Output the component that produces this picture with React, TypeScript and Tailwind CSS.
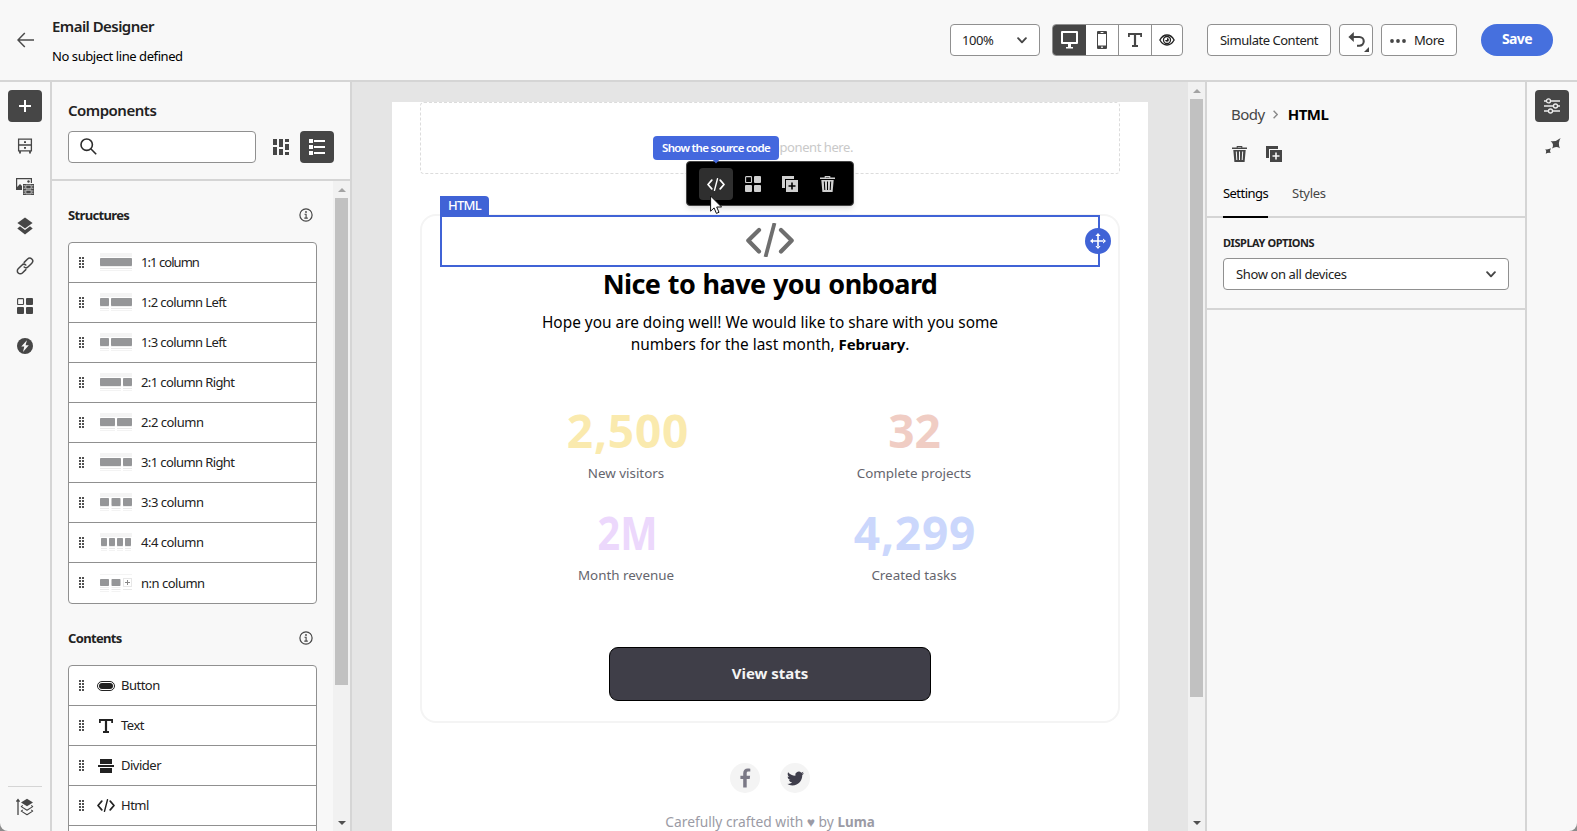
import type { ReactNode } from "react";

type IconProps = { className?: string };

const PlusIcon = () => (
  <svg width="12" height="12" viewBox="0 0 12 12" fill="none" stroke="#fff" strokeWidth="2"><path d="M6 0v12M0 6h12" /></svg>
);

const BackIcon = () => (
  <svg width="18" height="16" viewBox="0 0 18 16" fill="none" stroke="#4b4b4b" strokeWidth="1.5"><path d="M7.8 1 1 8l6.8 7M1 8h16" /></svg>
);

const DrawerIcon = () => (
  <svg width="16" height="16" viewBox="0 0 16 16" fill="none" stroke="#464646" strokeWidth="1.3">
    <path d="M1.6 1.1h12.8v11.8H1.6zM1.6 7h12.8" />
    <path d="M3 13v2.4M13 13v2.4M7 4.2h2M7 9.8h2" strokeWidth="1.8" />
  </svg>
);

const MediaIcon = () => (
  <svg className="mt-0.5" width="18" height="18" viewBox="0 0 18 18" fill="#464646">
    <path d="M0 0h16v5h-1.2V1.2H1.2V9L4 6l2 2v4H0z" />
    <circle cx="12.5" cy="3.5" r="1.2" />
    <path d="M7 6h11v11H7z" />
    <path d="M9.8 7.2h5.4v3.6H9.8zM9.8 12.2h5.4v3.6H9.8z" fill="#464646" stroke="#f8f8f8" strokeWidth=".7" />
    <path d="M7.7 7.2h1v1h-1zm0 2.6h1v1h-1zm0 2.6h1v1h-1zm0 2.4h1v1h-1zM16.3 7.2h1v1h-1zm0 2.6h1v1h-1zm0 2.6h1v1h-1zm0 2.4h1v1h-1z" fill="#f8f8f8" />
  </svg>
);

const LayersIcon = () => (
  <svg width="18" height="18" viewBox="0 0 18 18" fill="#464646">
    <path d="M9 .6 16.6 6 9 11.4 1.4 6z" />
    <path d="m4 9.3 5 3.7 5-3.7 2.7 2.1L9 17.4l-7.7-6z" />
  </svg>
);

const LinkIcon = () => (
  <svg width="18" height="18" viewBox="0 0 18 18" fill="none" stroke="#464646" strokeWidth="1.5" strokeLinecap="round">
    <path d="M8.2 5.4 11.6 2a2.9 2.9 0 0 1 4.2 4.2l-3.6 3.6a2.9 2.9 0 0 1-4 .2" />
    <path d="M9.8 12.6 6.4 16a2.9 2.9 0 0 1-4.2-4.2l3.6-3.6a2.9 2.9 0 0 1 4-.2" />
  </svg>
);

const TilesIcon = ({ className = "text-[#464646]" }: IconProps) => (
  <svg className={className} width="16" height="16" viewBox="0 0 16 16" fill="currentColor">
    <rect x=".6" y=".6" width="5.9" height="5.9" rx=".6" fill="none" stroke="currentColor" strokeWidth="1.1" />
    <rect x="9" width="7" height="7" rx="1" /><rect y="9" width="7" height="7" rx="1" /><rect x="9" y="9" width="7" height="7" rx="1" />
  </svg>
);

const BoltIcon = () => (
  <svg width="16" height="16" viewBox="0 0 16 16"><circle cx="8" cy="8" r="8" fill="#464646" /><path d="M9.9 2.2 4.3 8.6h3L6 13.9l5.8-6.7H8.6z" fill="#f8f8f8" /></svg>
);

const StackArrowIcon = () => (
  <svg width="18" height="18" viewBox="0 0 18 18" fill="none" stroke="#464646" strokeWidth="1.1">
    <path d="M2 17V2.2M.4 3.6 2 1.6l1.6 2" strokeWidth="1.3" />
    <path d="m11 .8 6 3.7-6 3.7-6-3.7z" fill="#464646" stroke="none" />
    <path d="m6.7 7.4-1.4 1.2L11 12.2l5.7-3.6-1.4-1.2M6.7 11.8l-1.4 1.3L11 16.8l5.7-3.7-1.4-1.3" strokeLinejoin="round" />
  </svg>
);

const SearchIcon = () => (
  <svg className="-mt-0.5" width="17" height="17" viewBox="0 0 17 17" fill="none" stroke="#2c2c2c" strokeWidth="1.6"><circle cx="6.7" cy="6.7" r="5.7" /><path d="m10.8 10.8 5.4 5.4" /></svg>
);

const MosaicIcon = () => (
  <svg width="16" height="16" viewBox="0 0 16 16" fill="#464646"><path d="M0 0h4v6H0zM0 8h4v8H0zM6 0h4v8H6zM6 10h4v6H6zM12 0h4v3h-4zM12 5h4v6h-4zM12 13h4v3h-4z" /></svg>
);

const ListIcon = () => (
  <svg width="16" height="16" viewBox="0 0 16 16" fill="#fff"><path d="M0 0h4v4H0zM0 6h4v4H0zM0 12h4v4H0zM5 1h11v2H5zM5 7h11v2H5zM5 13h11v2H5z" /></svg>
);

const InfoIcon = () => (
  <svg width="14" height="14" viewBox="0 0 14 14" fill="none" stroke="#464646" strokeWidth="1.2">
    <circle cx="7" cy="7" r="6.1" /><path d="M5.5 6.2h1.6v3.9M5.3 10.1h3.5" strokeWidth="1.1" /><circle cx="7" cy="4" r=".9" fill="#464646" stroke="none" />
  </svg>
);

const ChevronIcon = () => (
  <svg width="10" height="7" viewBox="0 0 10 7" fill="none" stroke="#464646" strokeWidth="1.9" strokeLinecap="round" strokeLinejoin="round"><path d="M1.1 1.2 5 5.3l3.9-4.1" /></svg>
);

const DesktopIcon = () => (
  <svg className="-ml-px" width="17" height="18" viewBox="0 0 17 18" fill="#fff"><path fillRule="evenodd" d="M1 0h15a1 1 0 0 1 1 1v11a1 1 0 0 1-1 1h-6v3h2v1.6H5V16h2v-3H1a1 1 0 0 1-1-1V1a1 1 0 0 1 1-1zm1 2v9h13V2z" /></svg>
);

const PhoneIcon = () => (
  <svg width="10" height="18" viewBox="0 0 10 18" fill="#464646"><path fillRule="evenodd" d="M1 0h8a1 1 0 0 1 1 1v16a1 1 0 0 1-1 1H1a1 1 0 0 1-1-1V1a1 1 0 0 1 1-1zm0 3v11.6h8V3z" /><path d="M3.6 1.1h2.8v.8H3.6zM4.2 15.6h1.6v1.4H4.2z" fill="#fff" /></svg>
);

const TextIcon = ({ className = "text-[#464646]" }: IconProps) => (
  <svg className={className} width="14" height="14" viewBox="0 0 14 14" fill="currentColor"><path d="M0 0h14v4h-1.8V2H8.1v10H10v2H4v-2h1.9V2H1.8v2H0z" /></svg>
);

const EyeIcon = () => (
  <svg className="-ml-px" width="16" height="12" viewBox="0 0 17 13"><path d="M.8 6.5C2.6 3.2 5.2 1.1 8.5 1.1s5.9 2.1 7.7 5.4c-1.8 3.3-4.4 5.4-7.7 5.4S2.6 9.8.8 6.5z" fill="none" stroke="#222" strokeWidth="1.5" /><circle cx="8.5" cy="6.5" r="4.5" fill="#222" /><circle cx="8.5" cy="6.5" r="3.1" fill="#fff" /><path d="M8.5 4.2v2.3H6.4a2.1 2.1 0 1 0 2.1-2.3z" fill="#222" /></svg>
);

const UndoIcon = () => (
  <svg width="17" height="16" viewBox="0 0 17 16"><path d="M4 5h7.4a4.3 4.3 0 0 1 0 8.7H9" fill="none" stroke="#464646" strokeWidth="2.1" /><path d="M5.8 0v10L.4 5z" fill="#464646" /></svg>
);

const TrashIcon = ({ className = "text-[#464646]" }: IconProps) => (
  <svg className={className} width="15" height="16" viewBox="0 0 15 16" fill="currentColor">
    <path fillRule="evenodd" d="M4.7 1.5V0h5.6v1.5H15V3H0V1.5zM5.7 1v.6h3.6V1zM1.3 4h12.4l-1.1 12H2.4zm2.5 1.5.5 8.6h1l-.5-8.6zm3.2 0v8.6h1V5.5zm3.2 0-.5 8.6h1l.5-8.6z" />
  </svg>
);

const DuplicateIcon = ({ className = "text-[#464646]" }: IconProps) => (
  <svg className={className} width="16" height="16" viewBox="0 0 16 16" fill="currentColor">
    <path d="M0 0h12v3H3v9H0z" />
    <path fillRule="evenodd" d="M4 4h12v12H4zm5.2 2.5v2.7H6.5v1.6h2.7v2.7h1.6v-2.7h2.7V9.2h-2.7V6.5z" />
  </svg>
);

const CodeIcon = ({ className = "text-[#222]" }: IconProps) => (
  <svg className={className} width="18" height="13" viewBox="0 0 18 13" fill="none" stroke="currentColor" strokeWidth="1.7" strokeLinecap="round" strokeLinejoin="round">
    <path d="M4.8 2.1 1 6.5l3.8 4.4M13.2 2.1 17 6.5l-3.8 4.4" /><path d="M10.5.7 7.5 12.3" strokeWidth="1.4" />
  </svg>
);

const BigCodeIcon = () => (
  <svg className="-mt-0.5" width="48" height="34" viewBox="0 0 48 34" fill="none" stroke="#6e6e6e" strokeLinecap="round" strokeLinejoin="round">
    <path d="M13 7 2.3 17.5 13 28.5M35 7l10.7 10.5L35 28.5" strokeWidth="4.2" /><path d="M28.5 0 19.5 34" strokeWidth="3.8" strokeLinecap="butt" />
  </svg>
);

const ButtonIcon = () => (
  <svg width="18" height="10" viewBox="0 0 18 10"><rect x=".5" y=".5" width="17" height="9" rx="4.5" fill="none" stroke="#222" /><rect x="2" y="2" width="14" height="6" rx="3" fill="#222" /></svg>
);

const DividerIcon = () => (
  <svg width="16" height="14" viewBox="0 0 16 14" fill="#222"><path d="M2 0h12v5H2zM0 6h16v2H0zM2 9h12v5H2z" /></svg>
);

const SlidersIcon = () => (
  <svg width="16" height="16" viewBox="0 0 16 16" stroke="#eee" strokeWidth="1.3" fill="#464646">
    <path d="M0 3h16M0 8h16M0 13h16" /><circle cx="4.5" cy="2.9" r="2" /><circle cx="11.5" cy="8" r="2" /><circle cx="6.5" cy="13" r="2" />
  </svg>
);

const SparkleIcon = () => (
  <svg width="16" height="16" viewBox="0 0 16 16" fill="#464646">
    <path d="M15.6 0Q12.600 4.600 14.900 10.300 11 7.400 7 10.500 9.600 6.300 5.600 3.200 10.800 4.100 15.600 0z" />
    <path d="M5.900 10.300Q4.400 12.700 5.700 15 3.300 14 .800 15.800 2.200 13.200.300 11.300 3.200 11.900 5.900 10.300z" />
  </svg>
);

const GripIcon = () => (
  <svg className="-mt-px" width="5" height="11" viewBox="0 0 5 11" fill="#505050"><path d="M0 0h2v2H0zM3 0h2v2H3zM0 3h2v2H0zM3 3h2v2H3zM0 6h2v2H0zM3 6h2v2H3zM0 9h2v2H0zM3 9h2v2H3z" /></svg>
);

const ColumnsIcon = ({ blocks, extra }: { blocks: [number, number][]; extra?: boolean }) => (
  <svg className="-mt-px" width="32" height="18" viewBox="0 0 32 18">
    <rect width="32" height={extra ? 1 : 4} fill="#f4f4f4" />
    {blocks.map(([x, w]) => (
      <g key={x}>
        <rect x={x} y="5" width={w} height={extra ? 7 : 8} rx=".8" fill="#959698" />
        <rect x={x} y="13" width={w} height="1" fill="#eeeeee" />
        <rect x={x} y="15" width={w} height="1" fill="#e9e9e9" />
        <rect x={x} y="17" width={w} height="1" fill="#f3f3f3" />
      </g>
    ))}
    {extra && (
      <g fill="none">
        <rect x="23.5" y="4.5" width="8" height="8" stroke="#cfcfcf" strokeDasharray="1 1" />
        <path d="M27.5 6v5M25 8.5h5" stroke="#888" />
        <path d="M23 15.5h9" stroke="#e9e9e9" />
      </g>
    )}
  </svg>
);

const structures: { label: string; blocks: [number, number][]; tracking?: string; extra?: boolean }[] = [
  { label: "1:1 column", blocks: [[0, 32]], tracking: "tracking-[-0.95px]" },
  { label: "1:2 column Left", blocks: [[0, 9], [11, 21]], tracking: "tracking-[-0.6px]" },
  { label: "1:3 column Left", blocks: [[0, 9], [11, 21]], tracking: "tracking-[-0.6px]" },
  { label: "2:1 column Right", blocks: [[0, 21], [23, 9]], tracking: "tracking-[-0.6px]" },
  { label: "2:2 column", blocks: [[0, 15], [17, 15]] },
  { label: "3:1 column Right", blocks: [[0, 21], [23, 9]], tracking: "tracking-[-0.6px]" },
  { label: "3:3 column", blocks: [[0, 9], [11.5, 9], [23, 9]] },
  { label: "4:4 column", blocks: [[1, 6], [9, 6], [17, 6], [25, 6]] },
  { label: "n:n column", blocks: [[0, 9], [11.5, 9]], extra: true },
];

const contents: { label: string; icon: ReactNode }[] = [
  { label: "Button", icon: <ButtonIcon /> },
  { label: "Text", icon: <TextIcon className="text-[#222]" /> },
  { label: "Divider", icon: <DividerIcon /> },
  { label: "Html", icon: <CodeIcon /> },
];

const stats = [
  { value: "2,500", label: "New visitors", color: "pl-1 text-[#faeaae] tracking-[0.8px]" },
  { value: "32", label: "Complete projects", color: "pl-px text-[#f0cdc4]" },
  { value: "2M", label: "Month revenue", color: "pl-1 text-[#ecd8fc] scale-x-[0.86]" },
  { value: "4,299", label: "Created tasks", color: "pl-0.5 text-[#cbd7fc] tracking-[0.8px]" },
];

function Scrollbar({ thumb }: { thumb: string }) {
  return (
    <div className="flex w-[17px] shrink-0 flex-col items-center bg-[#f1f1f1]">
      <div className="flex h-[17px] shrink-0 items-center justify-center">
        <svg width="8" height="4" viewBox="0 0 8 4"><path d="M4 0 8 4H0z" fill="#a3a3a3" /></svg>
      </div>
      <div className={`w-[13px] bg-[#c1c1c1] ${thumb}`} />
      <div className="mt-auto flex h-[17px] shrink-0 items-center justify-center">
        <svg width="8" height="4" viewBox="0 0 8 4"><path d="M0 0h8L4 4z" fill="#505050" /></svg>
      </div>
    </div>
  );
}

function SectionTitle({ children }: { children: ReactNode }) {
  return (
    <div className="flex h-5 items-center justify-between pr-1 text-[13px] font-bold tracking-[-0.65px] text-[#222]">
      <span className="pt-px">{children}</span>
      <InfoIcon />
    </div>
  );
}

function Header() {
  return (
    <header className="flex h-[82px] shrink-0 items-center border-b-2 border-[#d5d5d5] pr-6 pl-[17px]">
      <BackIcon />
      <div className="ml-[17px] flex flex-col gap-[10px] pt-0.5">
        <h1 className="text-[15px] leading-5 font-semibold tracking-[-0.55px] text-[#222]">Email Designer</h1>
        <p className="text-[13px] leading-5 tracking-[-0.42px] text-black">No subject line defined</p>
      </div>
      <div className="ml-auto flex h-8 items-stretch text-[13px] tracking-[-0.47px] text-[#222]">
        <button className="flex w-[90px] items-center justify-between rounded border border-[#909090] bg-white pt-px pr-3 pl-[11px]">100%<ChevronIcon /></button>
        <div className="ml-3 flex w-[131px] overflow-hidden rounded border border-[#909090] bg-white">
          <span className="flex w-[33px] items-center justify-center bg-[#464646]"><DesktopIcon /></span>
          <span className="flex w-[33px] items-center justify-center border-r border-[#909090]"><PhoneIcon /></span>
          <span className="flex w-[33px] items-center justify-center border-r border-[#909090]"><TextIcon /></span>
          <span className="flex flex-1 items-center justify-center"><EyeIcon /></span>
        </div>
        <button className="ml-6 w-[124px] rounded border border-[#909090] bg-white pt-0.5">Simulate Content</button>
        <button className="relative ml-2 flex w-[34px] items-center justify-center rounded border border-[#909090] bg-white">
          <UndoIcon />
          <svg className="absolute right-[3px] bottom-[3px]" width="5" height="5" viewBox="0 0 5 5"><path d="M5 0v5H0z" fill="#464646" /></svg>
        </button>
        <button className="ml-2 flex w-[76px] items-center gap-2 rounded border border-[#909090] bg-white pt-px pl-2">
          <svg width="16" height="4" viewBox="0 0 16 4" fill="#464646"><circle cx="2" cy="2" r="1.9" /><circle cx="8" cy="2" r="1.9" /><circle cx="14" cy="2" r="1.9" /></svg>
          More
        </button>
        <button className="ml-6 w-[72px] rounded-full bg-[#4670de] pb-[3px] text-[14px] font-bold tracking-[-0.6px] text-white">Save</button>
      </div>
    </header>
  );
}

function LeftRail() {
  const icons = [<DrawerIcon />, <MediaIcon />, <LayersIcon />, <LinkIcon />, <TilesIcon />, <BoltIcon />];
  return (
    <nav className="flex w-[52px] shrink-0 flex-col items-center border-r-2 border-[#d5d5d5] pt-2">
      <span className="flex h-8 w-[34px] items-center justify-center rounded bg-[#464646]"><PlusIcon /></span>
      <div className="mt-1 flex flex-col">
        {icons.map((icon, i) => <span key={i} className="flex h-10 items-center justify-center">{icon}</span>)}
      </div>
      <div className="mt-auto flex h-[45px] w-[34px] justify-center border-t border-[#d5d5d5] pt-[11px]"><StackArrowIcon /></div>
    </nav>
  );
}

function ComponentsPanel() {
  return (
    <aside className="flex w-[300px] shrink-0 flex-col border-r-2 border-[#d5d5d5]">
      <div className="h-[99px] shrink-0 border-b-2 border-[#d5d5d5] px-4 pt-[18px]">
        <h2 className="text-[15px] leading-5 font-semibold tracking-[-0.5px] text-[#222]">Components</h2>
        <div className="mt-[11px] flex h-8 items-center">
          <div className="flex h-8 w-[188px] items-center rounded border border-[#909090] bg-white pl-[11px]"><SearchIcon /></div>
          <span className="ml-[17px]"><MosaicIcon /></span>
          <span className="ml-[11px] flex h-8 w-[34px] items-center justify-center rounded bg-[#464646]"><ListIcon /></span>
        </div>
      </div>
      <div className="flex min-h-0 flex-1">
        <div className="min-w-0 flex-1 overflow-hidden pt-6 pl-4">
          <div className="w-[249px]">
            <SectionTitle>Structures</SectionTitle>
            <ul className="mt-[17px] divide-y divide-[#909090] overflow-hidden rounded border border-[#909090] bg-white">
              {structures.map((s) => (
                <li key={s.label} className="flex h-10 items-center pl-2.5">
                  <GripIcon />
                  <span className="ml-4"><ColumnsIcon blocks={s.blocks} extra={s.extra} /></span>
                  <span className={`ml-[9px] text-[13px] leading-[19px] text-[#222] ${s.tracking ?? "tracking-[-0.5px]"}`}>{s.label}</span>
                </li>
              ))}
            </ul>
            <div className="mt-6"><SectionTitle>Contents</SectionTitle></div>
            <ul className="mt-[17px] divide-y divide-[#909090] overflow-hidden rounded-t border border-[#909090] bg-white">
              {contents.map((c) => (
                <li key={c.label} className="flex h-10 items-center pl-2.5">
                  <GripIcon />
                  <span className="ml-3 flex w-5 justify-center">{c.icon}</span>
                  <span className="ml-[5px] text-[13px] leading-[19px] tracking-[-0.5px] text-[#222]">{c.label}</span>
                </li>
              ))}
              <li className="h-10" />
            </ul>
          </div>
        </div>
        <Scrollbar thumb="h-[487px]" />
      </div>
    </aside>
  );
}

function SelectionToolbar() {
  return (
    <>
      <div className="absolute top-[59px] left-[294px] flex h-[45px] w-[168px] items-center gap-[3px] rounded border border-[#444] bg-black pt-px pl-3 shadow-md">
        <span className="flex h-8 w-[34px] items-center justify-center rounded bg-[#2f2f2f]"><CodeIcon className="text-white" /></span>
        <span className="flex w-[34px] justify-center"><TilesIcon className="text-[#d0d0d0]" /></span>
        <span className="flex w-[34px] justify-center"><DuplicateIcon className="text-[#d0d0d0]" /></span>
        <span className="flex w-[34px] justify-center pl-px"><TrashIcon className="text-[#d0d0d0]" /></span>
      </div>
      <div className="absolute top-[34px] left-[261px] flex h-6 w-[126px] items-center justify-center rounded bg-[#4468de] text-[11.5px] font-semibold tracking-[-0.7px] text-white">
        Show the source code
        <svg className="absolute top-[23px] left-[59px]" width="8" height="5" viewBox="0 0 8 5"><path d="M0 0h8L4 4.5z" fill="#4468de" /></svg>
      </div>
      <svg className="absolute top-[93px] left-[318px]" width="13" height="20" viewBox="0 0 13 20"><path d="M.6 1v15.2l3.5-3.3 2.3 5.5 2.6-1.1-2.3-5.3h4.9z" fill="#fff" stroke="#111" strokeLinejoin="round" /></svg>
    </>
  );
}

function Canvas() {
  return (
    <main className="flex min-w-0 flex-1 bg-[#e5e5e5]">
      <div className="flex-1 overflow-hidden px-10 pt-5">
        <div className="relative h-[760px] w-[756px] bg-white px-7 font-['Noto_Sans','Open_Sans',sans-serif]">
          <div className="flex h-[72px] items-center justify-end rounded border border-dashed border-[#dcdcdc] pt-[19px] pr-[266px] text-[13px] tracking-[-0.43px] text-[#c9c9c9]">
            Drop your component here.
          </div>
          <section className="mt-10 h-[509px] rounded-2xl border-2 border-[#f4f4f4]">
            <div className="relative -mt-px ml-[18px] flex h-[52px] w-[660px] items-center justify-center border-2 border-[#4063d6] bg-white">
              <span className="absolute -top-[21px] -left-0.5 flex h-5 w-[49px] items-center justify-center rounded-tr bg-[#4063d6] text-[13px] font-medium tracking-[-0.7px] text-white">HTML</span>
              <BigCodeIcon />
              <span className="absolute top-[11px] -right-[13px] flex size-[26px] items-center justify-center rounded-full bg-[#4063d6]">
                <svg width="16" height="16" viewBox="0 0 16 16" fill="#fff"><path d="M7.2 2.5h1.6v4.7h4.7v1.6H8.8v4.7H7.2V8.8H2.5V7.2h4.7zM8 0l2.6 3H5.4zM8 16l2.6-3H5.4zM0 8l3-2.6v5.2zM16 8l-3-2.6v5.2z" /></svg>
              </span>
            </div>
            <h2 className="pt-0.5 text-center text-[27px] leading-[30px] font-bold tracking-[-0.6px] text-black [word-spacing:1px]">Nice to have you onboard</h2>
            <p className="mt-[13px] h-11 text-center text-[15.4px] leading-[22px] whitespace-nowrap text-black">
              Hope you are doing well! We would like to share with you some<br />
              numbers for the last month, <b className="text-[15px] leading-none font-bold tracking-[-0.1px]">February</b>.
            </p>
            <div className="mx-auto mt-[46px] grid w-[576px] grid-cols-2 gap-y-[21px]">
              {stats.map((s) => (
                <div key={s.label} className="flex flex-col items-center">
                  <span className={`text-[46px] leading-[56px] font-bold ${s.color}`}>{s.value}</span>
                  <span className="mt-[5px] text-[13.4px] leading-5 text-[#65656d]">{s.label}</span>
                </div>
              ))}
            </div>
            <button className="mx-auto mt-[62px] block h-[54px] w-[322px] rounded-[9px] border border-black bg-[#3f3e48] pb-0.5 text-[15px] font-bold text-[#f4f4f4]">View stats</button>
          </section>
          <div className="mt-10 flex justify-center gap-5">
            <span className="flex size-[30px] items-center justify-center rounded-full bg-[#f4f4f4]">
              <svg width="11" height="20" viewBox="0 0 11 20"><path d="M3.2 19.5V11H.4V7.8h2.8V5.2C3.2 2.1 5 .5 7.7.5c1.3 0 2.3.1 2.6.2v2.9H8.5c-1.4 0-1.8.7-1.8 1.7v2.5h3.4L9.7 11h-3v8.5z" fill="#7b7986" /></svg>
            </span>
            <span className="flex size-[30px] items-center justify-center rounded-full bg-[#f4f4f4]">
              <svg width="17" height="17" viewBox="0 0 24 24" fill="#3f3e4b"><path d="M23.95 4.57a10 10 0 0 1-2.82.77 4.96 4.96 0 0 0 2.16-2.72c-.95.55-2.01.95-3.13 1.18a4.92 4.92 0 0 0-8.38 4.48C7.69 8.09 4.07 6.13 1.64 3.16a4.82 4.82 0 0 0-.67 2.48c0 1.71.87 3.21 2.19 4.1a4.9 4.9 0 0 1-2.23-.62v.06a4.92 4.92 0 0 0 3.95 4.83 5 5 0 0 1-2.21.08 4.94 4.94 0 0 0 4.6 3.42A9.87 9.87 0 0 1 0 19.54a13.99 13.99 0 0 0 7.55 2.21c9.05 0 14-7.5 14-13.98 0-.21 0-.42-.02-.63a9.94 9.94 0 0 0 2.46-2.55z" /></svg>
            </span>
          </div>
          <p className="mt-[19px] text-center text-[13.8px] leading-5 whitespace-nowrap text-[#9b9ba5]">Carefully crafted with ♥ by <b className="text-[13.4px] font-bold">Luma</b></p>
          <SelectionToolbar />
        </div>
      </div>
      <Scrollbar thumb="h-[598px]" />
    </main>
  );
}

function PropertiesPanel() {
  return (
    <aside className="w-[322px] shrink-0 border-x-2 border-[#d5d5d5]">
      <div className="h-[136px] border-b-2 border-[#d5d5d5] pl-4">
        <div className="flex items-center pt-[22px] pl-2 text-[15px] leading-5 tracking-[-0.5px]">
          <span className="text-[#464646]">Body</span>
          <svg className="mr-[10px] ml-2" width="5" height="9" viewBox="0 0 5 9" fill="none" stroke="#8a8a8a" strokeWidth="1.4"><path d="m.6.8 3.6 3.7L.6 8.2" /></svg>
          <span className="font-bold text-black">HTML</span>
        </div>
        <div className="mt-[22px] flex gap-[19px] pl-[9px]"><TrashIcon /><DuplicateIcon /></div>
        <div className="mt-[21px] flex h-[35px] gap-6 text-[13px] leading-5">
          <span className="h-[35px] border-b-2 border-black tracking-[-0.55px] text-black">Settings</span>
          <span className="tracking-[-0.3px] text-[#464646]">Styles</span>
        </div>
      </div>
      <div className="h-[92px] border-b-2 border-[#d5d5d5] px-4 pt-[15px]">
        <h3 className="text-[11px] leading-5 font-bold tracking-[-0.45px] text-[#222]">DISPLAY OPTIONS</h3>
        <div className="mt-[5px] flex h-8 items-center justify-between rounded border border-[#909090] bg-white pt-px pr-3 pl-3 text-[13px] tracking-[-0.38px] text-[#222]">
          Show on all devices<ChevronIcon />
        </div>
      </div>
    </aside>
  );
}

export default function App() {
  return (
    <div className="h-[831px] w-[1577px] bg-[#8c8c8c]">
      <div className="flex h-full flex-col overflow-hidden rounded-b-lg bg-[#f8f8f8] font-['Noto_Sans','Open_Sans',sans-serif]">
        <Header />
        <div className="flex min-h-0 flex-1">
          <LeftRail />
          <ComponentsPanel />
          <Canvas />
          <PropertiesPanel />
          <nav className="flex w-[50px] shrink-0 flex-col items-center pt-2">
            <span className="flex h-8 w-[34px] items-center justify-center rounded bg-[#464646]"><SlidersIcon /></span>
            <span className="mt-4 pl-0.5"><SparkleIcon /></span>
          </nav>
        </div>
      </div>
    </div>
  );
}
